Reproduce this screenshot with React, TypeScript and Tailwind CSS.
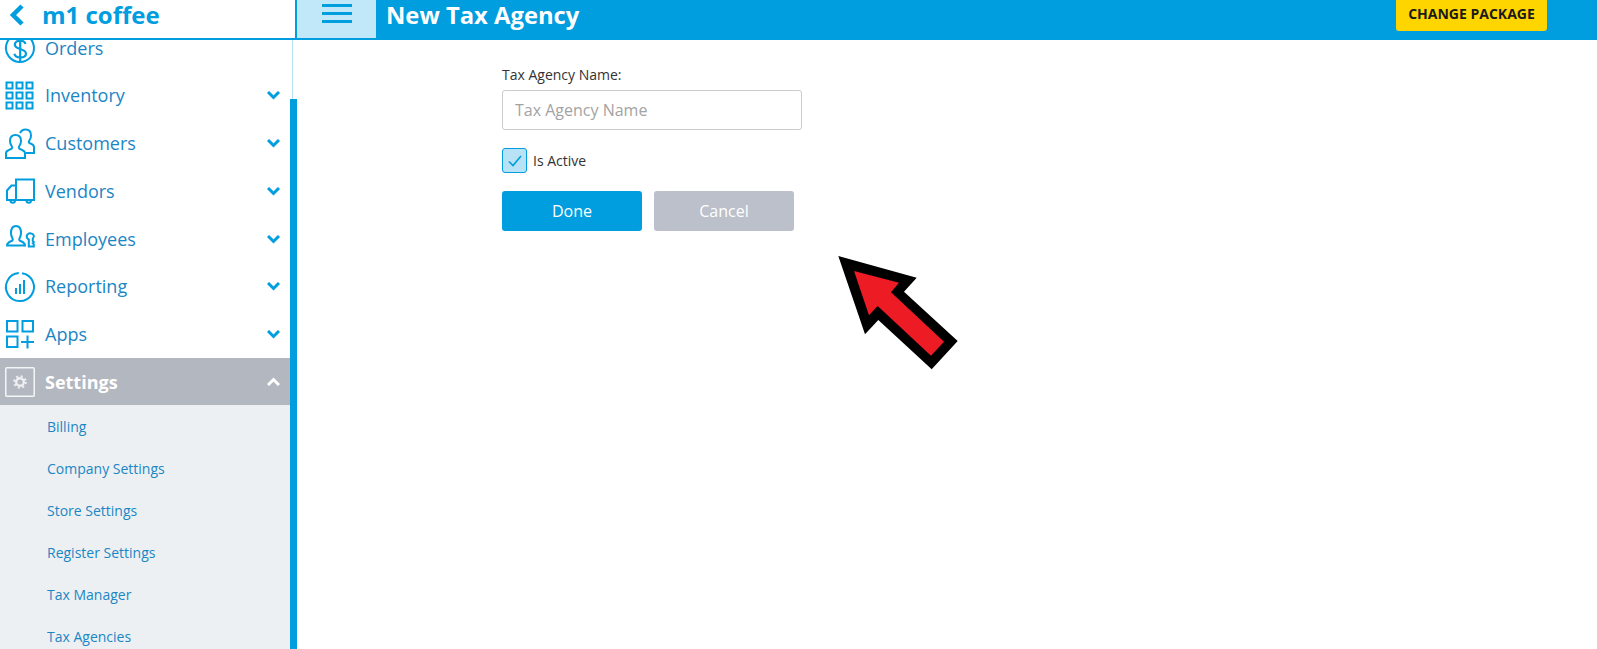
import React from "react";

const B = "#009ddf";

function Ic({ children }: { children: React.ReactNode }) {
  return (
    <svg width="30" height="30" viewBox="0 0 30 30" fill="none" stroke={B} strokeWidth="2" className="shrink-0 overflow-visible">
      {children}
    </svg>
  );
}

const DollarIcon = () => (
  <Ic>
    <path d="M9 2.300A14 14 0 1 0 22.500 3.200" />
    <path d="M20.500 11c-.5-2.200-2.500-3.300-5.200-3.300-3 0-5.500 1.500-5.500 4 0 5 11.200 3.500 11.200 8.800 0 2.500-2.500 4-5.700 4-3 0-5.300-1.300-6-3.800M15.200 4.500v24" strokeWidth="2.200" />
    <path d="M26 0.500v3" />
  </Ic>
);
const GridIcon = () => (
  <Ic>
    {[1.5, 11.5, 21.5].flatMap((y) =>
      [1.5, 11.5, 21.5].map((x) => <rect key={`${x}-${y}`} x={x} y={y} width="6" height="6" />)
    )}
  </Ic>
);
const CustomersIcon = () => (
  <Ic>
    <path d="M1 29v-5c0-2 2.500-3 5-4 1.500-.6 1.500-1.700.5-3.200-1-1.500-1.500-3-1.500-4.800 0-3.500 2-6 5.500-6s5.500 2.500 5.500 6c0 1.800-.5 3.300-1.500 4.800-1 1.500-1 2.600.5 3.200 2.500 1 5 2 5 4v5z" />
    <path d="M15 4c1-2 3-3.500 5.500-3.500 3.500 0 5.500 2.500 5.500 6 0 1.800-.5 3.300-1.500 4.800-1 1.500-1 2.400.5 3 2 .8 4 1.700 4 3.700v6h-8" />
  </Ic>
);
const TruckIcon = () => (
  <Ic>
    <path d="M11 3.500h18v20.500H2v-9.500l4.500-5H11zM11 3.500V24" />
    <path d="M5.500 24.500a2.200 2.200 0 0 0 4.500 0M21.500 24.500a2.200 2.200 0 0 0 4.500 0" />
  </Ic>
);
const EmployeesIcon = () => (
  <Ic>
    <path d="M2 21.500c0-2.500 2-3.500 4.500-4.500 1.500-.6 1.500-1.700.8-3-.9-1.500-1.300-3-1.300-5C6 4.500 8 2 11 2s5 2.500 5 7c0 2-.4 3.500-1.300 5-.7 1.300-.7 2.400.8 3 2.500 1 4.500 2 4.500 4.500z" />
    <path d="M26 9.500a2.800 2.800 0 0 1 1.800 5v2.500l1 1-1 1.200 1 1v2.300h-5v-7a2.800 2.800 0 0 1 2.200-6z" />
  </Ic>
);
const ReportingIcon = () => (
  <Ic>
    <path d="M13.800 1.100A14 14 0 1 0 17 1.200" />
    <path d="M11 22v-6M15 22V12M19 22V8" />
  </Ic>
);
const AppsIcon = () => (
  <Ic>
    <rect x="2" y="2" width="10.500" height="10.500" />
    <rect x="17.500" y="2" width="10.500" height="10.500" />
    <rect x="2" y="17.500" width="10.500" height="10.500" />
    <path d="M16 23h13M22.500 16.500v13" />
  </Ic>
);
const SettingsIcon = () => (
  <svg width="30" height="30" viewBox="0 0 30 30" fill="none" className="shrink-0">
    <rect x="0.750" y="0.750" width="28.500" height="28.500" rx="1" stroke="#f4f5f7" strokeWidth="1.500" />
    <circle cx="15" cy="15" r="3.800" stroke="#eef0f2" strokeWidth="2.400" />
    <circle cx="15" cy="15" r="5.800" stroke="#eef0f2" strokeWidth="2" strokeDasharray="2 2.550" />
  </svg>
);

function Chevron({ up = false, color = B }: { up?: boolean; color?: string }) {
  return (
    <svg width="13" height="9" viewBox="0 0 13 9" fill="none" stroke={color} strokeWidth="3" className="shrink-0">
      <path d={up ? "M1 8l5.500-5.500L12 8" : "M1 1l5.500 5.500L12 1"} />
    </svg>
  );
}

function NavRow({ icon, label, chevron = true }: { icon: React.ReactNode; label: string; chevron?: boolean }) {
  return (
    <div className="flex h-[47.700px] items-center pl-[5px] pr-[10.500px]">
      {icon}
      <span className="ml-[10px] flex-1 text-[18px] text-[#1b86c4]">{label}</span>
      {chevron && <Chevron />}
    </div>
  );
}

const subItems = ["Billing", "Company Settings", "Store Settings", "Register Settings", "Tax Manager", "Tax Agencies"];

export default function App() {
  return (
    <div className="flex h-[649px] w-[1597px] flex-col overflow-hidden bg-white font-['Open_Sans',sans-serif]">
      <header className="flex h-[40px] shrink-0 border-b-2 border-[#009ddf]">
        <div className="flex w-[295px] items-start pl-[9px] pt-[2px]">
          <svg width="16" height="22" viewBox="0 0 16 22" fill="none" stroke={B} strokeWidth="4.500" className="mt-[2px]">
            <path d="M13 2L4 11l9 9" />
          </svg>
          <span className="ml-[17px] text-[24px] font-bold leading-[26px] text-[#009ddf]">m1 coffee</span>
        </div>
        <div className="w-[2px] bg-[#009ddf]" />
        <div className="flex w-[79px] flex-col items-center justify-start gap-[5px] bg-[#c0e8f8] pt-[4px]">
          <div className="h-[3px] w-[30px] bg-[#009ddf]" />
          <div className="h-[3px] w-[30px] bg-[#009ddf]" />
          <div className="h-[3px] w-[30px] bg-[#009ddf]" />
        </div>
        <div className="flex flex-1 items-start justify-between bg-[#009ddf] pl-[10px] pr-[50px]">
          <h1 className="mt-[-2px] text-[23.800px] font-bold leading-[34px] text-white">New Tax Agency</h1>
          <div className="flex h-[31px] w-[151px] items-center justify-center rounded-b-[3px] bg-[#ffd500] pb-[5px] text-[14px] font-bold text-[#1a1a1a]">
            CHANGE PACKAGE
          </div>
        </div>
      </header>

      <div className="flex min-h-0 flex-1">
        <aside className="flex w-[297px] shrink-0">
          <nav className="w-[290px] overflow-hidden">
            <div className="mt-[-15.600px]">
              <NavRow icon={<DollarIcon />} label="Orders" chevron={false} />
              <NavRow icon={<GridIcon />} label="Inventory" />
              <NavRow icon={<CustomersIcon />} label="Customers" />
              <NavRow icon={<TruckIcon />} label="Vendors" />
              <NavRow icon={<EmployeesIcon />} label="Employees" />
              <NavRow icon={<ReportingIcon />} label="Reporting" />
              <NavRow icon={<AppsIcon />} label="Apps" />
              <div className="flex h-[47px] items-center bg-[#b3b7c0] pl-[5px] pr-[10.500px]">
                <SettingsIcon />
                <span className="ml-[10px] flex-1 pt-[1px] text-[18px] font-bold text-white">Settings</span>
                <Chevron up color="#ffffff" />
              </div>
              <ul className="bg-[#ecf0f3] pb-[40px]">
                {subItems.map((s) => (
                  <li key={s} className="flex h-[42px] items-center pl-[47px] text-[14px] text-[#1b86c4]">
                    {s}
                  </li>
                ))}
              </ul>
            </div>
          </nav>
          <div className="flex w-[7px] flex-col">
            <div className="h-[59px] shrink-0 pl-[2px]">
              <div className="h-full w-[1px] bg-[#b5e3f6]" />
            </div>
            <div className="flex-1 bg-[#009ddf]" />
          </div>
        </aside>

        <main className="flex-1 pl-[205px] pt-[26px]">
          <label className="block text-[14px] leading-[18px] text-[#333]">Tax Agency Name:</label>
          <input
            placeholder="Tax Agency Name"
            className="mt-[6px] block h-[40px] w-[300px] rounded-[3px] border border-[#ccc] bg-white px-[12px] text-[16px] placeholder:text-[#a3a3a3]"
          />
          <div className="mt-[18px] flex items-center">
            <div className="flex h-[25px] w-[25px] items-center justify-center rounded-[3px] border border-[#009ddf] bg-[#b8e2f5]">
              <svg width="14" height="12" viewBox="0 0 14 12" fill="none" stroke={B} strokeWidth="1.600">
                <path d="M1 6.500L5 10.500 13 1" />
              </svg>
            </div>
            <span className="ml-[6px] text-[14px] text-[#333]">Is Active</span>
          </div>
          <div className="mt-[18px] flex gap-[12px]">
            <button className="h-[40px] w-[140px] rounded-[3px] bg-[#009ddf] text-[16px] text-white">Done</button>
            <button className="h-[40px] w-[140px] rounded-[3px] bg-[#bcc0cb] text-[16px] text-white">Cancel</button>
          </div>
        </main>
      </div>

      <svg width="135" height="125" viewBox="830 250 135 125" className="pointer-events-none absolute left-[830px] top-[250px]">
        <polygon points="838.300,256 916.700,277.700 904,291.700 957.700,341 931.700,369.300 878.300,320 865,334.300" fill="#000" />
        <polygon points="854,271 899,282.700 891,292.300 944,341.700 931,355.700 877.700,306 869,315.300" fill="#ed1c24" />
      </svg>
    </div>
  );
}
